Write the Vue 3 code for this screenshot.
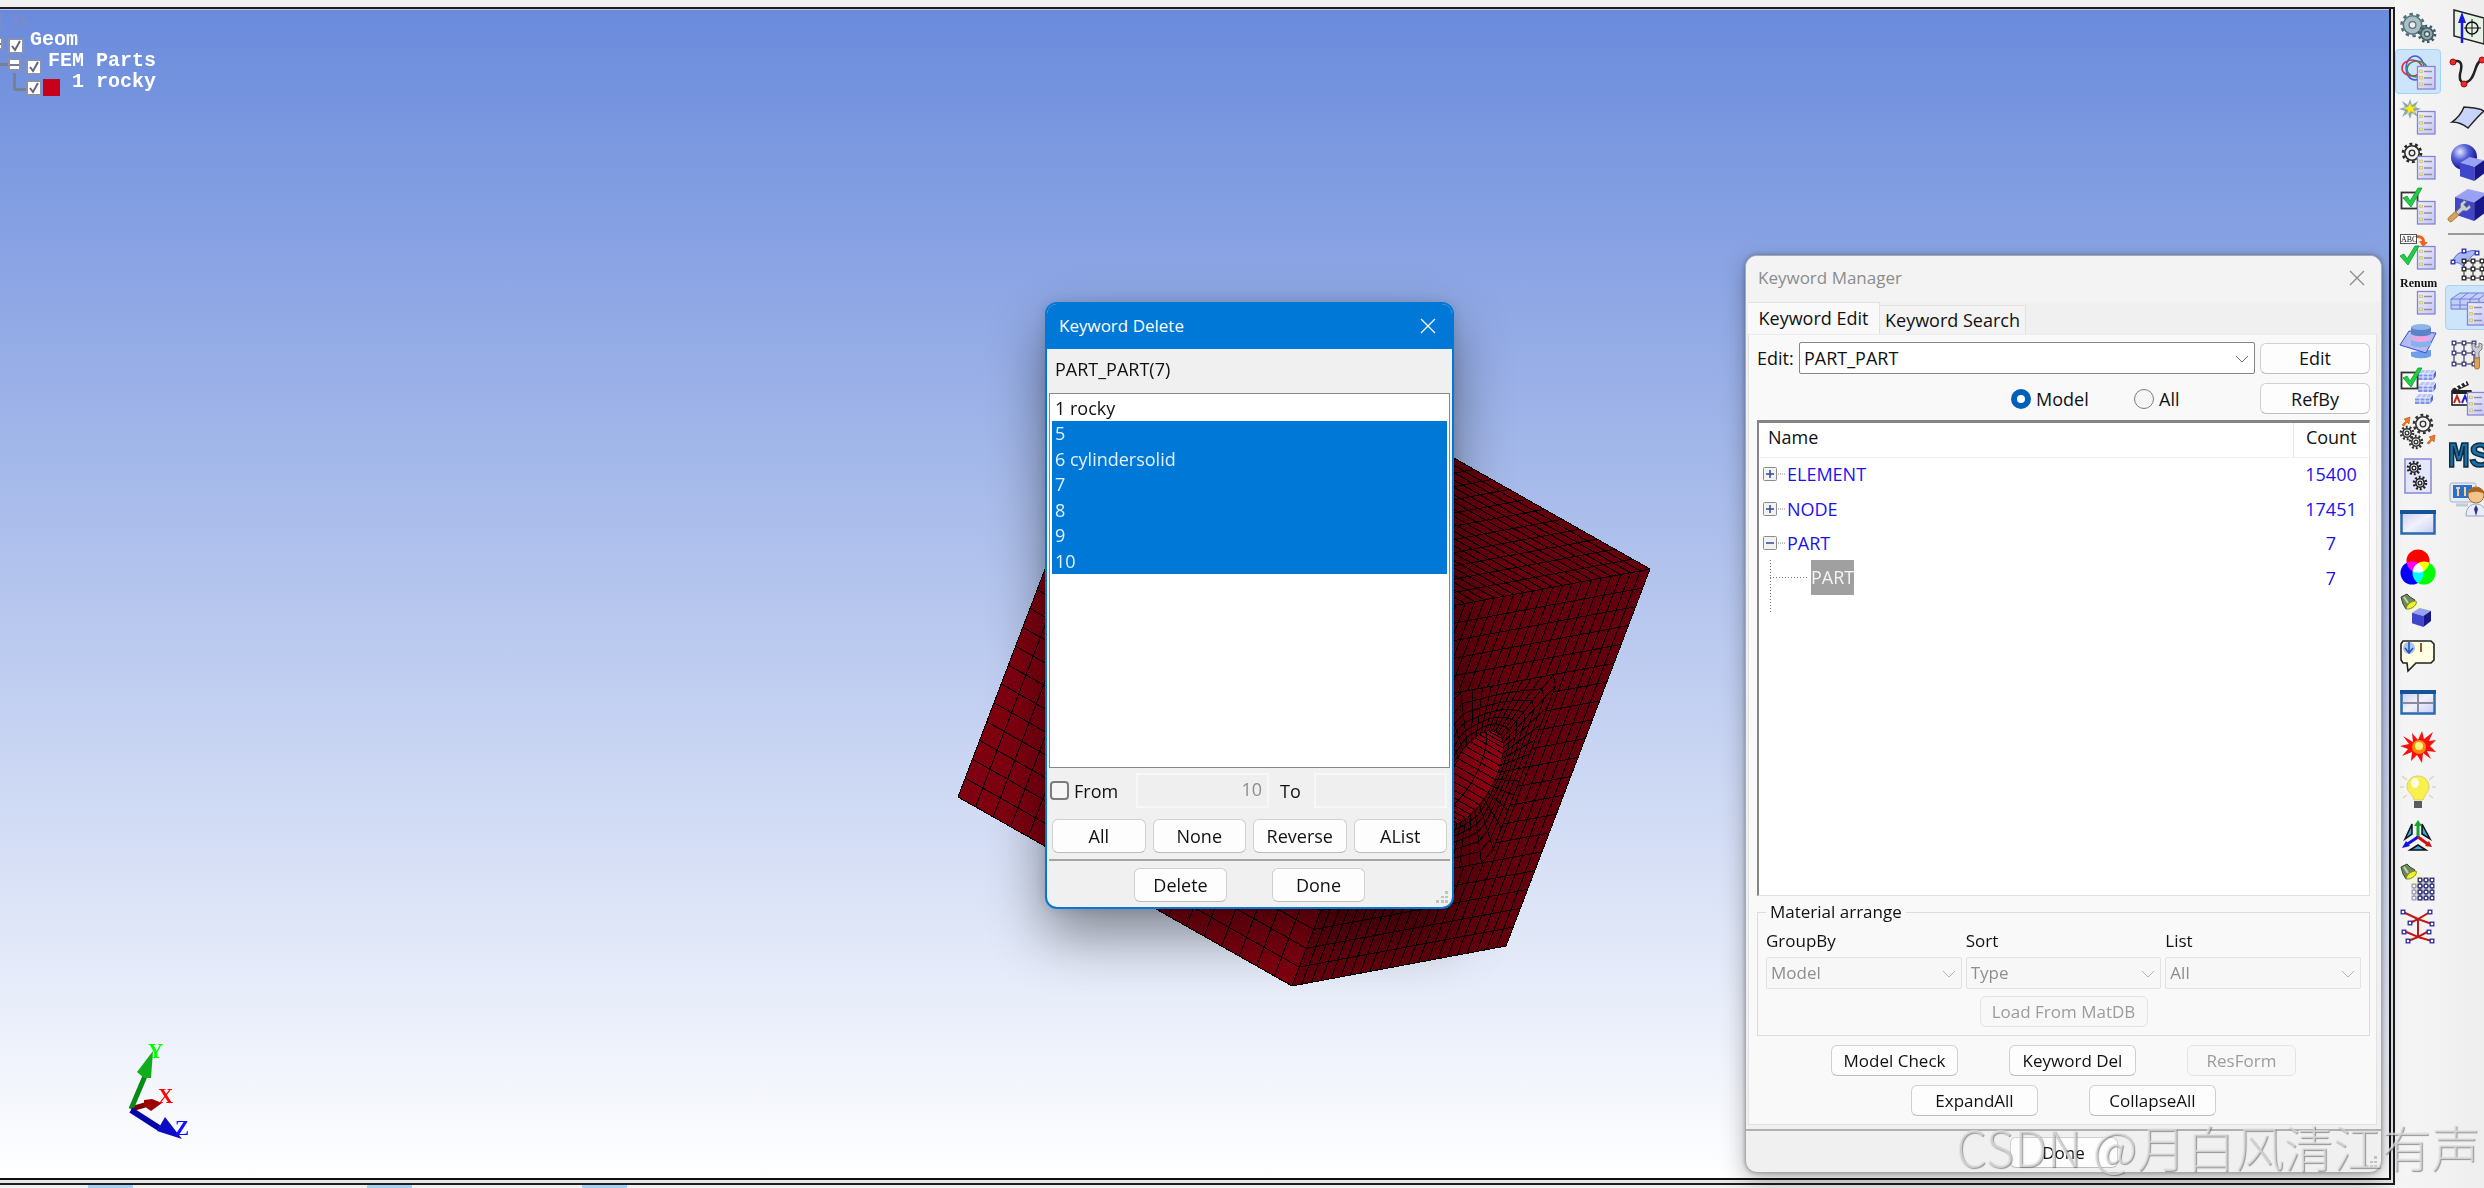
<script setup>
import { ref } from 'vue'

/* ---------- mesh geometry ---------- */
const V = [144, -377]
const corner = [334, 606]
const dirLeft = [-334, -189]
const dirRight = [214, -40]
const topCorner = [corner[0] + V[0], corner[1] + V[1]]

const at = (o, a, b, u, v) => [o[0] + a[0] * u + b[0] * v, o[1] + a[1] * u + b[1] * v]
const fmt = (p) => p[0].toFixed(1) + ' ' + p[1].toFixed(1)
const seg = (p, q) => 'M' + fmt(p) + 'L' + fmt(q)

function face(o, a, b) {
  return 'M' + [at(o, a, b, 0, 0), at(o, a, b, 1, 0), at(o, a, b, 1, 1), at(o, a, b, 0, 1)].map(fmt).join('L') + 'Z'
}
function grid(o, a, b, nu, nv, hole = false) {
  let d = ''
  for (let i = 0; i <= nu; i++) {
    const u = i / nu
    if (hole && u > 0.25 && u < 0.75) {
      d += seg(at(o, a, b, u, 0), at(o, a, b, u, 0.25)) + seg(at(o, a, b, u, 0.75), at(o, a, b, u, 1))
    } else d += seg(at(o, a, b, u, 0), at(o, a, b, u, 1))
  }
  for (let j = 0; j <= nv; j++) {
    const v = j / nv
    if (hole && v > 0.25 && v < 0.75) {
      d += seg(at(o, a, b, 0, v), at(o, a, b, 0.25, v)) + seg(at(o, a, b, 0.75, v), at(o, a, b, 1, v))
    } else d += seg(at(o, a, b, 0, v), at(o, a, b, 1, v))
  }
  return d
}
const SPOKES = 44
function ringPoint(t, k, shift = 0) {
  const c = Math.cos(t)
  const s = Math.sin(t)
  const m = Math.max(Math.abs(c), Math.abs(s))
  const r = 0.125 + (0.25 / m - 0.125) * k
  const p = at(corner, dirRight, V, 0.5 + c * r, 0.5 + s * r)
  return [p[0] + dirLeft[0] * shift, p[1] + dirLeft[1] * shift]
}
function ring(k, shift = 0) {
  let d = ''
  for (let i = 0; i < SPOKES; i++) d += (i ? 'L' : 'M') + fmt(ringPoint((i / SPOKES) * 2 * Math.PI, k, shift))
  return d + 'Z'
}
const holePath = ring(0)
let ringLines = ''
for (const k of [0, 0.13, 0.27, 0.42, 0.59, 0.78, 1]) ringLines += ring(k)
let boreLines = ring(0, 0.05) + ring(0, 0.11)
for (let i = 0; i < SPOKES; i++) {
  const t = (i / SPOKES) * 2 * Math.PI
  ringLines += seg(ringPoint(t, 0), ringPoint(t, 1))
  boreLines += seg(ringPoint(t, 0), ringPoint(t, 0, 0.2))
}
const faces = {
  left: face(corner, dirLeft, V),
  right: face(corner, dirRight, V),
  top: face(topCorner, dirLeft, dirRight),
}
const grids = grid(corner, dirLeft, V, 19, 20) + grid(corner, dirRight, V, 22, 20, true) + grid(topCorner, dirLeft, dirRight, 19, 22)

/* ---------- dialog data ---------- */
const parts = ref([
  { label: '1 rocky' },
  { label: '5', selected: true },
  { label: '6 cylindersolid', selected: true },
  { label: '7', selected: true },
  { label: '8', selected: true },
  { label: '9', selected: true },
  { label: '10', selected: true },
])
const keywords = [
  { name: 'ELEMENT', count: 15400, open: false },
  { name: 'NODE', count: 17451, open: false },
  { name: 'PART', count: 7, open: true },
]
const scope = ref('model')
const arrange = [
  { id: 'group', label: 'GroupBy', value: 'Model' },
  { id: 'sort', label: 'Sort', value: 'Type' },
  { id: 'list', label: 'List', value: 'All' },
]

/* ---------- toolbar icons, 36 x 36 ---------- */
const page =
  '<rect x="17.5" y="12.5" width="17.5" height="22.5" fill="url(#gPage)" stroke="#8585cf" stroke-width="1.3"/><path d="M24 17.5h8M24 24h8M24 30.500h8" stroke="#8f8fa8" stroke-width="1.5"/><path d="M19.5 16h3v2.500h-3zM19.5 22.500h3v2.500h-3zM19.5 29h3v2.500h-3z" fill="#f6ee7a" stroke="#b0a860" stroke-width=".5"/>'
const gear = (x, y, r, c, f = 'none') =>
  `<circle cx="${x}" cy="${y}" r="${r}" fill="none" stroke="${c}" stroke-width="2.6" stroke-dasharray="${((r * Math.PI) / 10).toFixed(2)}"/><circle cx="${x}" cy="${y}" r="${r - 1.8}" fill="${f}" stroke="${c}" stroke-width="1.6"/><circle cx="${x}" cy="${y}" r="${(r / 3.2).toFixed(1)}" fill="#eee" stroke="${c}" stroke-width="1.3"/>`
const box = '<rect x="1.5" y="3.5" width="16" height="16" fill="#fff" stroke="#333" stroke-width="1.8"/>'
const check = (x, y) =>
  `<path d="M${x} ${y}l4-2 3 5 8-13 4 0-11 19z" fill="#1fd044" stroke="#0e9a2c" stroke-width=".8"/>`
const cube = (x, y, s) =>
  `<path d="M${x} ${y + s * 0.25}l${s * 0.4} ${-s * 0.25} ${s * 0.6} ${s * 0.14} ${-s * 0.4} ${s * 0.28}z" fill="#97a2f2"/><path d="M${x} ${y + s * 0.25}l${s * 0.6} ${s * 0.17}v${s * 0.58}l${-s * 0.6} ${-s * 0.2}z" fill="#4046cc"/><path d="M${x + s * 0.6} ${y + s * 0.42}l${s * 0.4} ${-s * 0.28}v${s * 0.55}l${-s * 0.4} ${s * 0.31}z" fill="#17178a"/>`
const block = (x, y) =>
  `<path d="M${x} ${y + 4}l4-4h14l-3 4z" fill="#b9c6f5"/><path d="M${x} ${y + 4}h15v6H${x}z" fill="#7f92e6"/><path d="M${x + 15} ${y + 4}l3-4v6l-3 4z" fill="#5468cf"/><path d="M${x} ${y + 4}h15l3-4M${x} ${y + 7}h15M${x + 5} ${y + 10}v-6l3-4M${x + 10} ${y + 10}v-6l3-4M${x + 15} ${y + 10}v-6" fill="none" stroke="#f4f6ff" stroke-width=".9"/>`
const lamp =
  '<path d="M1 3l6-3 3 3 5 3-9 9-3-5z" fill="#6f8a5c" stroke="#37492f"/><path d="M6 15c1-5 5-8 10-8 2 3-4 9-10 8z" fill="#eef02a" stroke="#7d8a28"/><path d="M4 3l4 6" stroke="#c4d8b4" stroke-width="2"/>'
const arrow = (x, y) => `<path d="M${x} ${y + 8}l4-4-2-2 6-2-1 7-2-2-3 4z" fill="#f07a1e" stroke="#c2470c" stroke-width=".6"/>`
const node = (x, y, c = '#2a2aa8') => `<rect x="${x - 1.8}" y="${y - 1.8}" width="3.6" height="3.6" fill="#fff" stroke="${c}" stroke-width="1.3"/>`
const wrench = (x, y, t = '') =>
  `<g transform="translate(${x} ${y}) ${t}"><rect x="-2.5" y="6" width="5" height="13" rx="2" fill="#dba25a" stroke="#8d5d22" stroke-width=".7"/><path d="M-2 8V2l-3-3v-5l3-1v4h4v-4l3 1v5l-3 3v6z" fill="#c9ccd4" stroke="#666" stroke-width=".8"/></g>`
const nodeGrid = (xs, ys, c) => {
  let s = `<path d="${xs.map((x) => `M${x} ${ys[0]}V${ys[ys.length - 1]}`).join('')}${ys.map((y) => `M${xs[0]} ${y}H${xs[xs.length - 1]}`).join('')}" stroke="#222" fill="none"/>`
  xs.forEach((x) => ys.forEach((y) => (s += node(x, y, c))))
  return s
}
const windowArt =
  '<rect x="1.5" y="7.5" width="33" height="22" fill="url(#gWin)" stroke="#2b6cb0" stroke-width="2.5"/><path d="M0 8h36" stroke="#15549a" stroke-width="4"/>'

const mainTools = [
  { id: 'Settings', art: gear(12.5, 16, 11, '#56737c', '#a9c0c6') + gear(27, 25, 8, '#3f5a63', '#8fa9b0') },
  { id: 'Keyword manager', active: true, art: '<g fill="none" stroke-width="1.6"><ellipse cx="15" cy="14" rx="9" ry="12" stroke="#4a5ae0"/><ellipse cx="12" cy="14" rx="10" ry="8" stroke="#e02f4a"/><ellipse cx="17" cy="15" rx="10" ry="8" stroke="#3f8a5a"/></g>' + page },
  { id: 'Create entity', art: '<path d="M10 0l2 6 6-4-3 6 6 2-6 2 3 6-6-4-2 6-2-6-6 4 3-6-6-2 6-2-3-6 6 4z" fill="#8aa9b8"/><path d="M10 4l2 4 5-1-4 3 3 5-5-3-4 4 1-5-5-2 5-1z" fill="#ffe80a"/>' + page },
  { id: 'Part data', art: gear(12, 9, 9, '#2b2b2b') + page },
  { id: 'Check data', art: box + check(3, 9) + page },
  { id: 'Rename', art: '<rect x=".5" y=".5" width="16" height="9" fill="#fff" stroke="#555"/><text x="1" y="8" font-family="Liberation Serif" font-size="8" fill="#111">ABC</text>' + page + '<path d="M17 1c6 0 8 3 8 7h3l-5 5-4-6h3c0-2-2-3-5-3z" fill="#f0621e"/>' + check(0, 22) },
  { id: 'Renumber', art: '<text x="0" y="8" font-family="Liberation Serif" font-weight="bold" font-size="12" fill="#111">Renum</text>' + page },
  { id: 'Section cut', art: '<path d="M11 28v4c3 3 17 3 20 0v-6z" fill="#6f9fe6"/><path d="M0 21L9 7l27 2-10 20z" fill="#b4bcf4" stroke="#3f49d8"/><path d="M11 15v6c3 3 17 3 20 0v-6z" fill="#86b2ee"/><ellipse cx="21" cy="15" rx="10" ry="3" fill="#f2a4e0"/><path d="M11 3h20v7c-4 3-16 3-20 0z" fill="#5c83c8"/><ellipse cx="21" cy="3" rx="10" ry="3" fill="#8fb4ea"/>' },
  { id: 'Model check', art: block(18, 1) + block(18, 13) + block(15, 25) + box + check(3, 9) },
  { id: 'Group parts', art: gear(23, 10, 9, '#333') + gear(7, 19, 6, '#333') + gear(16, 28, 6, '#333') + arrow(2, 3) + arrow(27, 21) },
  { id: 'Assembly', art: '<rect x="5" y="0" width="26" height="34" fill="#e4e6fb" stroke="#8f8fd6" stroke-width="1.6"/>' + gear(14, 9, 6, '#222') + gear(20, 24, 6, '#222') },
  { id: 'Single view', art: windowArt },
  { id: 'Colour', art: '<g style="isolation:isolate"><circle cx="18" cy="12" r="11.5" fill="#f00" style="mix-blend-mode:screen"/><circle cx="12" cy="24" r="11.5" fill="#00f" style="mix-blend-mode:screen"/><circle cx="24" cy="24" r="11.5" fill="#0f0" style="mix-blend-mode:screen"/></g>' },
  { id: 'Light', art: '<path d="M16 7l20 14-24 10-5-17z" fill="#f6f6d8"/>' + lamp + cube(12, 14, 19) },
  { id: 'Annotation', art: '<path d="M3 2h28l3 3v16l-3 3H16l-8 8-1-8H3l-2-3V5z" fill="#ffffe4" stroke="#222" stroke-width="1.6"/><circle cx="9" cy="9" r="6" fill="#a9c6f0"/><path d="M9 3v11M5 9l4 5 4-5" stroke="#2a56b8" fill="none" stroke-width="1.6"/><path d="M21 4v9" stroke="#8a5a34" stroke-width="2"/>' },
  { id: 'Split view', art: windowArt + '<path d="M18 10v18M3 19h30" stroke="#8a8a9c" stroke-width="2"/>' },
  { id: 'Explode', art: '<path d="M18 11l4-9 2 8 9-7-4 9 7-1-6 6 6 6-9-1 4 8-8-6-1 10-5-8-6 6 1-9-10 4 6-7-8-3 9-2-6-8 10 6-1-9z" fill="#f81010"/><circle cx="19" cy="18" r="7" fill="#ff8a00"/><circle cx="19" cy="17" r="4" fill="#fff58a"/>' },
  { id: 'Hint', art: '<path d="M2 2l5 4M34 2l-5 4M0 13h4M32 13h4M3 24l4-3M33 24l-4-3" stroke="#d8d8c8" stroke-width="1.5"/><path d="M18 2c7 0 11 5 11 11 0 5-4 7-6 13h-9C13 20 7 18 7 13 7 7 11 2 18 2z" fill="#f8f04c" stroke="#d6d07a"/><ellipse cx="15" cy="9" rx="4" ry="5" fill="#fffde0"/><path d="M14 27h8v7h-8z" fill="#5c5c5c"/>' },
  { id: 'Triad', art: '<path d="M5 20L12 5v10zM22 5l8 15-8-5zM10 31l8-5 8 5z" fill="#35a8e8" stroke="#111" stroke-width="1.5"/><path d="M18 18V5" stroke="#14a62c" stroke-width="3"/><path d="M14 7l4-6 4 6z" fill="#14a62c"/><path d="M18 18L6 26" stroke="#1212e0" stroke-width="3"/><path d="M2 29l4-7 4 5z" fill="#1212e0"/><path d="M18 18l11 8" stroke="#d01414" stroke-width="3"/><path d="M32 28l-3-6-4 5z" fill="#d01414"/>' },
  { id: 'Find nodes', art: '<path d="M16 7l16 9-16 16-8-18z" fill="#f6f6d8"/>' + lamp + '<g opacity=".45">' + nodeGrid([14, 20], [22, 28, 34], '#2a2a80') + '</g>' + nodeGrid([20, 26, 32], [16, 22, 28, 34], '#2a2a80') },
  { id: 'Network', art: '<path d="M3 3l15 7 12-7M10 14l8-4 14 5M18 10v18M4 22l14 6 11-6M8 32l10-4 14 4" fill="none" stroke="#c01818" stroke-width="2"/>' + [[3, 3], [30, 3], [10, 14], [32, 15], [4, 23], [29, 23], [8, 32], [32, 32]].map((p) => node(p[0], p[1])).join('') },
]
const sideTools = [
  { id: 'Plane', art: '<path d="M4 1l30 8v26L4 27z" fill="#e6f3e4" stroke="#222" stroke-width="1.5"/><circle cx="22" cy="19" r="6" fill="none" stroke="#111" stroke-width="1.5"/><path d="M22 10v18M14 19h17" stroke="#111"/><path d="M12 34V9" stroke="#1919e0" stroke-width="2.5"/><path d="M8 14l4-11 4 11z" fill="#1919e0"/>' },
  { id: 'Curve', art: '<path d="M3 8c10-4 9 5 7 12-1 7 2 10 7 8 9-3 7-20 15-22" fill="none" stroke="#222" stroke-width="2.5"/><g fill="#ee2a2a" stroke="#a00c0c"><circle cx="3" cy="8" r="3"/><circle cx="14" cy="30" r="3"/><circle cx="32" cy="6" r="3"/></g>' },
  { id: 'Surface', art: '<path d="M2 23C8 19 12 13 14 8c7 1 13 0 20 4-5 4-10 10-16 17-5-4-10-6-16-6z" fill="#c9d4fa" stroke="#222" stroke-width="1.5"/>' },
  { id: 'Solid', art: '<circle cx="14" cy="13" r="13" fill="url(#gBall)"/>' + cube(10, 13, 24) },
  { id: 'Geometry tools', art: cube(5, 0, 32) + wrench(13, 19, 'rotate(48)') },
  { id: 'Element surface', sep: true, art: '<path d="M1 18C5 12 8 6 13 8c7-2 11-4 14-1-6 4-9 9-14 14-5-5-8-3-12-3z" fill="#a8b8f6" stroke="#5865c8"/>' + node(3, 17) + node(14, 6) + node(27, 8) + nodeGrid([14, 23, 32], [16, 24, 33], '#222') },
  { id: 'Element tools', active: true, art: '<path d="M1 9l9-6h26v6l-6 11H1z" fill="#c3cef8"/><path d="M1 9h28l7-6M1 9l9-6h26M1 15h28M1 9v10h16M10 9v10M20 9v10M29 9v6M10 9l8-6M20 9l8-6" fill="none" stroke="#6e7fd8"/>' + page },
  { id: 'Node edit', art: nodeGrid([4, 14, 24], [8, 18, 29], '#3a3a90') + wrench(27, 15) },
  { id: 'Animation', art: '<path d="M2 9l15-8 2 4L4 12z" fill="#222"/><path d="M2 11h19v14H2z" fill="#fff" stroke="#111" stroke-width="1.5"/><path d="M2 10h19v4H2z" fill="#222"/><path d="M4 5l4 4M9 3l3 4M14 1l2 4" stroke="#fff" stroke-width="2"/><path d="M4 23l3-7 3 7" stroke="#c22" fill="none" stroke-width="2"/><path d="M12 23l3-7 3 7" stroke="#22c" fill="none" stroke-width="2"/>' + page },
  { id: 'MS', sep: true, art: '<text x="-2" y="31" font-family="Liberation Mono" font-weight="bold" font-size="36" fill="#1b6fa3" stroke="#0a2a44" stroke-width="1.5">MS</text>' },
  { id: 'Support', art: '<rect x="0" y="2" width="26" height="19" rx="2" fill="#e6ebf6" stroke="#a9b2c6"/><rect x="3" y="4" width="19" height="13" fill="#2c6fd0"/><path d="M8 7v8M6 7h4M15 6v9" stroke="#f5d58a" stroke-width="2"/><path d="M6 24h12" stroke="#c3c9d6" stroke-width="3"/><circle cx="26" cy="14" r="8" fill="#f0c48c" stroke="#9a6a34"/><path d="M17 13c1-8 16-9 18 0-6-3-12-3-18 0z" fill="#a8641e"/><path d="M16 35c0-9 5-12 10-12s10 3 10 12z" fill="#e9edfb" stroke="#9aa3bc"/><path d="M26 24l-2 4 2 7 2-7z" fill="#2b2f9a"/>' },
]
</script>

<template>
  <div class="app">
    <svg class="defs" width="0" height="0" aria-hidden="true">
      <defs>
        <linearGradient id="gPage" x1="0" y1="0" x2="1" y2="1">
          <stop offset="0" stop-color="#f4f4ff" />
          <stop offset="1" stop-color="#c4c4f4" />
        </linearGradient>
        <linearGradient id="gWin" x1="0" y1="0" x2="1" y2="1">
          <stop offset="0" stop-color="#c9cdf3" />
          <stop offset=".5" stop-color="#f2f2fb" />
          <stop offset="1" stop-color="#c4cbf6" />
        </linearGradient>
        <radialGradient id="gBall" cx=".35" cy=".3" r=".7">
          <stop offset="0" stop-color="#e4e8ff" />
          <stop offset=".45" stop-color="#5460d8" />
          <stop offset="1" stop-color="#12128a" />
        </radialGradient>
      </defs>
    </svg>

    <main class="workspace">
      <div class="frame">
        <div class="viewport">
          <div class="tree">
            <div class="collapse"><span class="bar"></span><svg width="16" height="16" viewBox="0 0 16 16"><path d="M1 1l7 7-7 7M8 1l7 7-7 7" fill="none" stroke="#7d8cc4" stroke-width="2" /></svg></div>
            <div class="trow"><i class="knob cut"></i><span class="cb"><svg viewBox="0 0 12 12"><path d="M2 6l3 4 5-9" /></svg></span><span>Geom</span></div>
            <div class="trow"><i class="stub"></i><i class="knob"></i><span class="cb"><svg viewBox="0 0 12 12"><path d="M2 6l3 4 5-9" /></svg></span><span>FEM Parts</span></div>
            <div class="trow leaf"><i class="elbow"></i><span class="cb"><svg viewBox="0 0 12 12"><path d="M2 6l3 4 5-9" /></svg></span><i class="swatch"></i><span class="pid">1</span><span>rocky</span></div>
          </div>

          <svg class="mesh" width="700" height="620" viewBox="0 0 700 620" shape-rendering="crispEdges">
            <clipPath id="bore"><path :d="holePath" /></clipPath>
            <path :d="faces.left" fill="#7f0010" />
            <path :d="faces.right" fill="#64000d" />
            <path :d="faces.top" fill="#66000d" />
            <path :d="grids + ringLines" fill="none" stroke="#000" />
            <g clip-path="url(#bore)">
              <path :d="holePath" fill="#900012" />
              <path :d="boreLines" fill="none" stroke="#000" />
            </g>
          </svg>

          <svg class="axes" width="80" height="110" viewBox="0 0 80 110">
            <path d="M11 75l14-4" stroke="#7c0000" stroke-width="5" />
            <path d="M24 66l8-1 10 4-11 8-7-5z" fill="#9c0404" />
            <path d="M11 75L25 42" stroke="#078a12" stroke-width="5" />
            <path d="M17 38L33 17l-2 27-7 0z" fill="#11ad1c" />
            <path d="M11 76l28 18" stroke="#0606a8" stroke-width="6" />
            <path d="M37 97l8-14 17 22z" fill="#0b0bc6" />
            <text x="28" y="24" fill="#0f0">Y</text>
            <text x="38" y="69" fill="#f00">X</text>
            <text x="55" y="101" fill="#11f">Z</text>
          </svg>
        </div>
      </div>
      <div class="taskline"><i></i><i></i><i></i></div>
    </main>

    <aside class="toolbars">
      <div class="toolcol">
        <button v-for="t in mainTools" :key="t.id" type="button" class="tool" :class="{ active: t.active }" :aria-label="t.id">
          <svg width="36" height="36" viewBox="0 0 36 36" v-html="t.art"></svg>
        </button>
      </div>
      <div class="toolcol">
        <template v-for="t in sideTools" :key="t.id">
          <hr v-if="t.sep" />
          <button type="button" class="tool" :class="{ active: t.active }" :aria-label="t.id">
            <svg width="36" height="36" viewBox="0 0 36 36" v-html="t.art"></svg>
          </button>
        </template>
      </div>
    </aside>

    <section class="dialog delete">
      <header>
        <h2>Keyword Delete</h2>
        <button type="button" class="close" aria-label="Close"><svg width="16" height="16" viewBox="0 0 16 16"><path d="M1 1l14 14M15 1L1 15" /></svg></button>
      </header>
      <p class="subject">PART_PART(7)</p>
      <ul class="list">
        <li class="plain">{{ parts[0].label }}</li>
        <li class="picked">
          <ul>
            <li v-for="p in parts.slice(1)" :key="p.label">{{ p.label }}</li>
          </ul>
        </li>
      </ul>
      <div class="range">
        <label class="from"><input type="checkbox" />From</label>
        <input class="num" type="text" value="10" disabled aria-label="From id" />
        <label for="to-id">To</label>
        <input id="to-id" class="num" type="text" disabled />
      </div>
      <div class="four">
        <button type="button" class="btn">All</button>
        <button type="button" class="btn">None</button>
        <button type="button" class="btn">Reverse</button>
        <button type="button" class="btn">AList</button>
      </div>
      <div class="actions">
        <button type="button" class="btn">Delete</button>
        <button type="button" class="btn">Done</button>
      </div>
      <svg class="grip" width="12" height="12" viewBox="0 0 12 12"><path d="M9 0h3v3H9zM5 5h3v2H5zM9 5h3v2H9zM0 9h3v3H0zM5 9h3v3H5zM9 9h3v3H9z" /></svg>
    </section>

    <section class="dialog manager">
      <header>
        <h2>Keyword Manager</h2>
        <button type="button" class="close" aria-label="Close"><svg width="16" height="16" viewBox="0 0 16 16"><path d="M1 1l14 14M15 1L1 15" /></svg></button>
      </header>
      <nav class="tabs">
        <button type="button" class="tab on">Keyword Edit</button>
        <button type="button" class="tab">Keyword Search</button>
      </nav>
      <div class="panel">
        <div class="editrow">
          <label for="kw">Edit:</label>
          <span class="combo">
            <select id="kw"><option>PART_PART</option></select>
            <svg width="14" height="8" viewBox="0 0 14 8"><path d="M1 1l6 6 6-6" /></svg>
          </span>
          <button type="button" class="btn">Edit</button>
        </div>
        <div class="scoperow">
          <label><input v-model="scope" type="radio" name="scope" value="model" />Model</label>
          <label><input v-model="scope" type="radio" name="scope" value="all" />All</label>
          <button type="button" class="btn">RefBy</button>
        </div>
        <div class="keys">
          <table>
            <thead>
              <tr><th>Name</th><th class="n">Count</th></tr>
            </thead>
            <tbody>
              <tr v-for="k in keywords" :key="k.name">
                <td><span class="cell"><svg width="24" height="14" viewBox="0 0 24 14"><rect x=".5" y=".5" width="13" height="13" rx="1" fill="#f2f2f2" stroke="#8c8c8c" /><path :d="k.open ? 'M3 7h8' : 'M3 7h8M7 3v8'" stroke="#2d4a9e" stroke-width="1.5" /><path d="M15 7h8" stroke="#888" stroke-dasharray="1 1" /></svg>{{ k.name }}</span></td>
                <td class="n">{{ k.count }}</td>
              </tr>
              <tr>
                <td><span class="cell child"><svg width="41" height="53" viewBox="0 0 41 53"><path d="M0.5 0v53M0 17.5h39" fill="none" stroke="#777" stroke-dasharray="1 2" /></svg><mark>PART</mark></span></td>
                <td class="n">7</td>
              </tr>
            </tbody>
          </table>
        </div>
        <fieldset>
          <legend>Material arrange</legend>
          <div class="arrange">
            <div v-for="a in arrange" :key="a.id">
              <label :for="a.id">{{ a.label }}</label>
              <span class="combo off">
                <select :id="a.id" disabled><option>{{ a.value }}</option></select>
                <svg width="14" height="8" viewBox="0 0 14 8"><path d="M1 1l6 6 6-6" /></svg>
              </span>
            </div>
          </div>
          <button type="button" class="btn load" disabled>Load From MatDB</button>
        </fieldset>
        <div class="row3">
          <button type="button" class="btn">Model Check</button>
          <button type="button" class="btn">Keyword Del</button>
          <button type="button" class="btn small" disabled>ResForm</button>
        </div>
        <div class="row2">
          <button type="button" class="btn">ExpandAll</button>
          <button type="button" class="btn">CollapseAll</button>
        </div>
      </div>
      <footer><button type="button" class="btn">Done</button></footer>
      <svg class="grip" width="12" height="12" viewBox="0 0 12 12"><path d="M9 0h3v3H9zM5 5h3v2H5zM9 5h3v2H9zM0 9h3v3H0zM5 9h3v3H5zM9 9h3v3H9z" /></svg>
    </section>

    <div class="watermark">CSDN @月白风清江有声</div>
  </div>
</template>

<style>
body {
  margin: 0;
  background: #f0f0f0;
}
</style>

<style scoped>
* {
  box-sizing: border-box;
}
.app {
  position: relative;
  display: flex;
  min-height: 100vh;
  overflow: hidden;
  background: #f0f0f0;
  color: #111;
  font: 18px/24px "Open Sans", "Noto Sans", sans-serif;
}
.defs {
  position: absolute;
}
button,
input,
select {
  font: inherit;
  color: inherit;
}

/* workspace */
.workspace {
  flex: 1;
  min-width: 0;
  display: flex;
  flex-direction: column;
  padding-top: 7px;
}
.frame {
  flex: 1;
  display: flex;
  border: solid #1e1e22;
  border-width: 2px 2px 2px 0;
  padding: 0 2px 3px 0;
  background: #e6e6e6;
}
.viewport {
  position: relative;
  flex: 1;
  border: solid #111;
  border-width: 0 2px 2px 0;
  background: linear-gradient(#6a8bdc, #fff);
  box-shadow: inset 0 1px #b9c6ea;
}
.taskline {
  height: 3px;
  display: flex;
  padding-left: 88px;
}
.taskline i {
  width: 45px;
  background: #a5d0f2;
}
.taskline i:nth-child(2) {
  margin-left: 234px;
}
.taskline i:nth-child(3) {
  margin-left: 170px;
}

.tree {
  padding-top: 4px;
  color: #fff;
  font: bold 20px/21px "Liberation Mono", monospace;
}
.collapse {
  display: flex;
  gap: 9px;
  height: 16px;
}
.bar {
  width: 2px;
  background: #7d8cc4;
}
.trow {
  display: flex;
  align-items: center;
  height: 21px;
}
.cb {
  display: flex;
  width: 16px;
  height: 16px;
  margin: 12px 6px 0 0;
  border: 2px solid #8890b4;
  background: #fff;
}
.cb path {
  fill: none;
  stroke: #62667e;
  stroke-width: 2;
}
.knob {
  width: 13px;
  height: 13px;
  margin: 8px 5px 0 0;
  border: 2px solid #8890b4;
  background: linear-gradient(#fff 4px, #777b90 4px, #777b90 6px, #fff 6px);
}
.knob.cut {
  width: 3px;
  border-left: 0;
}
.stub {
  width: 8px;
  height: 3px;
  margin-top: 8px;
  background: #7b7f90;
}
.elbow {
  width: 13px;
  height: 18px;
  margin-left: 13px;
  border: solid #7b7f90;
  border-width: 0 0 3px 3px;
  border-bottom-left-radius: 3px;
}
.leaf .cb {
  margin-right: 1px;
}
.swatch {
  width: 17px;
  height: 17px;
  margin-top: 12px;
  background: #c8001a;
}
.pid {
  padding: 0 12px;
}
.mesh {
  position: absolute;
  left: 958px;
  top: 371px;
}
.axes {
  position: absolute;
  left: 120px;
  bottom: 34px;
  font: bold 21px "Liberation Serif", serif;
}

/* toolbars */
.toolbars {
  width: 89px;
  display: flex;
  gap: 4px;
  padding-top: 4px;
  overflow: hidden;
  background: linear-gradient(90deg, #f6f6f6, #eee);
}
.toolcol {
  flex: none;
  width: 46px;
}
.tool {
  display: flex;
  align-items: center;
  justify-content: center;
  width: 46px;
  height: 45px;
  padding: 0;
  border: 1px solid transparent;
  border-radius: 4px;
  background: none;
}
.tool.active {
  background: #cce5fb;
  border-color: #a4d3f7;
}
.tool svg {
  overflow: visible;
}
hr {
  height: 2px;
  margin: 4px 0 5px 3px;
  border: 0;
  background: #9a9a9a;
}

/* dialogs */
.dialog {
  position: absolute;
  display: flex;
  flex-direction: column;
  border-radius: 12px;
  overflow: hidden;
}
header {
  display: flex;
  align-items: center;
  justify-content: space-between;
}
h2 {
  margin: 0;
  padding-bottom: 2px;
  font-size: 17px;
  font-weight: 400;
}
.close {
  display: flex;
  padding: 0 0 2px;
  border: 0;
  background: none;
}
.close path {
  stroke: currentColor;
  stroke-width: 1.3;
}
.btn {
  height: 34px;
  padding: 0;
  border: 1px solid #d0d0d0;
  border-bottom-color: #bdbdbd;
  border-radius: 6px;
  background: #fdfdfd;
  text-align: center;
}
.btn:disabled {
  color: #9c9c9c;
  border-color: #e4e4e4;
  background: #f8f8f8;
}
.grip {
  position: absolute;
  right: 4px;
  bottom: 4px;
  fill: #c2c2c2;
}

.delete {
  left: 1045px;
  top: 302px;
  width: 409px;
  border: 2px solid #0078d7;
  background: #f0f0f0;
  box-shadow: 0 26px 56px rgba(0, 0, 0, 0.42), 0 0 12px rgba(0, 0, 0, 0.12);
}
.delete header {
  height: 45px;
  padding: 0 16px 0 12px;
  background: #0078d7;
  color: #fff;
}
.subject {
  margin: 0;
  padding: 8px 8px 12px;
  height: 44px;
}
.list {
  height: 375px;
  margin: 0 2px;
  padding: 1px 2px;
  border: 1px solid #828790;
  background: #fff;
}
.list,
.list ul {
  list-style: none;
}
.list .plain {
  height: 26px;
  padding-left: 3px;
  line-height: 27px;
}
.list ul {
  display: flex;
  flex-direction: column;
  height: 153px;
  margin: 0;
  padding: 0 3px;
  background: #0078d7;
  color: #e4f1fc;
}
.list ul li {
  flex: 1;
}
.range {
  display: flex;
  align-items: center;
  height: 45px;
  padding: 0 5px 0 3px;
}
.from {
  display: flex;
  align-items: center;
  gap: 5px;
  width: 86px;
}
.from input {
  appearance: none;
  width: 19px;
  height: 19px;
  margin: 0;
  border: 2px solid #7c7c7c;
  border-radius: 4px;
  background: #f6f6f6;
}
.num {
  flex: 1;
  min-width: 0;
  height: 35px;
  padding: 0 5px 4px;
  border: 2px solid #f7f7f7;
  background: #efefef;
  color: #8e8e8e;
  text-align: right;
}
.range label[for] {
  width: 45px;
  padding-left: 11px;
}
.four {
  display: flex;
  gap: 7px;
  padding: 6px 5px 6px;
}
.four .btn {
  flex: 1;
}
.actions {
  display: flex;
  justify-content: center;
  gap: 45px;
  margin: 0 2px;
  padding: 7px 0 5px;
  border-top: 2px solid #a5a5a5;
}
.actions .btn {
  width: 93px;
}

.manager {
  right: 102px;
  top: 255px;
  width: 637px;
  border: 1px solid #a9a9ae;
  background: #f0f0f0;
  box-shadow: 0 8px 24px rgba(0, 0, 0, 0.28), 0 0 4px rgba(0, 0, 0, 0.3);
}
.manager header {
  height: 46px;
  padding: 0 16px 0 12px;
  background: #f3f3f3;
  color: #8c8c8c;
}
.tabs {
  display: flex;
  align-items: flex-end;
  height: 32px;
  padding-left: 2px;
}
.tab {
  width: 146px;
  height: 29px;
  padding: 0;
  border: 1px solid #e2e2e2;
  border-width: 1px 1px 0 0;
  background: #f3f3f3;
}
.tab.on {
  width: 132px;
  height: 32px;
  padding-bottom: 2px;
  background: #f9f9f9;
}
.panel {
  margin: 0 4px 0 2px;
  padding: 7px 6px 8px 8px;
  border: 1px solid #e2e2e2;
  border-top-color: #ececec;
  background: #f9f9f9;
}
.editrow {
  display: flex;
  align-items: center;
}
.editrow label {
  width: 42px;
}
.manager .btn {
  height: 31px;
}
.editrow .btn {
  width: 110px;
  margin-left: 5px;
}
.scoperow .btn {
  width: 110px;
  margin-left: 3px;
}
.combo {
  position: relative;
  display: flex;
  flex: 1;
}
.combo select {
  appearance: none;
  width: 100%;
  height: 32px;
  padding: 0 4px;
  border: 1px solid #868686;
  border-radius: 2px;
  background: #fff;
}
.combo svg {
  position: absolute;
  right: 6px;
  top: 13px;
  pointer-events: none;
  fill: none;
  stroke: #6a6a6a;
}
.combo.off select {
  border-color: #e2e2e2;
  background: #f7f7f7;
  color: #8e8e8e;
  opacity: 1;
}
.combo.off svg {
  stroke: #b4b4b4;
}
.scoperow {
  display: flex;
  align-items: center;
  justify-content: flex-end;
  margin-top: 9px;
}
.scoperow label {
  display: flex;
  align-items: center;
  gap: 5px;
  width: 123px;
}
.scoperow input {
  appearance: none;
  width: 20px;
  height: 20px;
  margin: 0;
  border: 1px solid #7c7c7c;
  border-radius: 50%;
  background: #f6f6f6;
}
.scoperow input:checked {
  border: 6px solid #005fb8;
  background: #fff;
}
.keys {
  height: 476px;
  margin-top: 6px;
  border: solid #e0e0e0;
  border-width: 3px 1px 1px 2px;
  border-top-color: #858585;
  border-left-color: #858585;
  background: #fff;
}
table {
  width: 100%;
  border-collapse: collapse;
  color: #1c10f0;
}
th {
  height: 34px;
  padding: 0 0 6px 9px;
  border-bottom: 1px solid #f2f2f2;
  color: #111;
  font-weight: 400;
  text-align: left;
}
.n {
  width: 76px;
  padding-left: 0;
  text-align: center;
}
th.n {
  border-left: 1px solid #e4e4e4;
}
td {
  height: 34px;
  padding: 0;
}
tr:nth-child(even) td {
  height: 35px;
}
.cell {
  display: flex;
  align-items: center;
  padding-left: 4px;
}
.cell.child {
  height: 35px;
  padding-left: 11px;
  align-items: flex-start;
}
.child svg {
  flex: none;
  margin-bottom: -18px;
}
mark {
  background: #a0a0a0;
  color: #f4f4f4;
  line-height: 35px;
}
fieldset {
  min-width: 0;
  margin: 4px 0 0;
  padding: 5px 8px 8px;
  border: 1px solid #dcdcdc;
  font-size: 17px;
}
legend {
  padding: 0 4px;
}
.arrange {
  display: flex;
  gap: 4px;
}
.arrange > div {
  flex: 1;
}
.arrange .combo {
  margin-top: 4px;
}
.load {
  display: block;
  width: 168px;
  margin: 7px auto 0;
}
.row3,
.row2 {
  display: flex;
  justify-content: center;
  gap: 51px;
  margin-top: 9px;
  font-size: 17px;
}
.row3 .btn,
.row2 .btn {
  width: 127px;
}
.row3 .small {
  width: 109px;
}
footer {
  margin-top: 4px;
  padding: 6px 0 4px;
  border-top: 2px solid #b0b0b0;
  text-align: center;
  font-size: 17px;
}
footer .btn {
  width: 108px;
  display: block;
  margin: 0 auto;
}
.watermark {
  position: absolute;
  right: 4px;
  bottom: 10px;
  font: 300 49px/64px "Noto Sans CJK SC", sans-serif;
  color: rgba(228, 228, 228, 0.7);
  text-shadow: 1px 1px 1px rgba(90, 90, 90, 0.6);
  white-space: nowrap;
  pointer-events: none;
}
</style>
